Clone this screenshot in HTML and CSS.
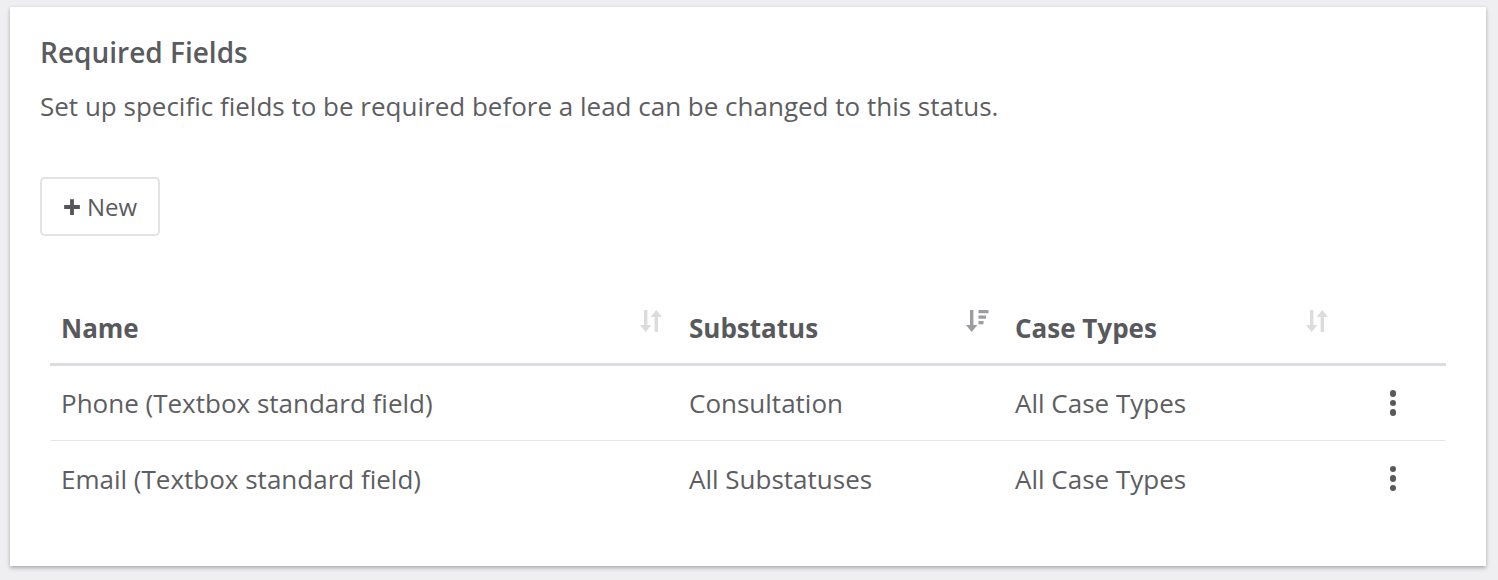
FILE: index.html
```html
<!DOCTYPE html>
<html>
<head>
<meta charset="utf-8">
<link rel="stylesheet" href="styles.css">
</head>
<body>
<div class="page">
  <section class="card">
    <h2 class="title">Required Fields</h2>
    <p class="desc">Set up specific fields to be required before a lead can be changed to this status.</p>
    <button class="btn-new" type="button">
      <svg class="plus" viewBox="0 0 16 16" width="18" height="18"><path d="M6.3 1h3.4v5.3H15v3.4H9.7V15H6.3V9.7H1V6.3h5.3z" fill="#555659"/></svg>
      <span>New</span>
    </button>
    <div class="table">
      <div class="row head">
        <div class="cell"><span>Name</span>
          <svg class="sort" viewBox="0 0 26 26" width="26" height="26"><path d="M6 2h3.4v15h4L7.7 24 2 17h4z M16.6 9h-4L18.3 2 24 9h-4v15h-3.4z" fill="#dcdcde"/></svg>
        </div>
        <div class="cell"><span>Substatus</span>
          <svg class="sort" viewBox="0 0 26 26" width="26" height="26"><path d="M6 2h3.4v15h4L7.7 24 2 17h4z" fill="#9c9da0"/><path d="M14.5 2h10v3.2h-10z M14.5 7.5h7.5v3.2h-7.5z M14.5 13h5v3.2h-5z" fill="#9c9da0"/></svg>
        </div>
        <div class="cell"><span>Case Types</span>
          <svg class="sort" viewBox="0 0 26 26" width="26" height="26"><path d="M6 2h3.4v15h4L7.7 24 2 17h4z M16.6 9h-4L18.3 2 24 9h-4v15h-3.4z" fill="#dcdcde"/></svg>
        </div>
        <div class="cell"></div>
      </div>
      <div class="row">
        <div class="cell">Phone (Textbox standard field)</div>
        <div class="cell">Consultation</div>
        <div class="cell">All Case Types</div>
        <div class="cell act"><span class="kebab"><i></i><i></i><i></i></span></div>
      </div>
      <div class="row last">
        <div class="cell">Email (Textbox standard field)</div>
        <div class="cell">All Substatuses</div>
        <div class="cell">All Case Types</div>
        <div class="cell act"><span class="kebab"><i></i><i></i><i></i></span></div>
      </div>
    </div>
  </section>
</div>
</body>
</html>
```

FILE: styles.css
```css
* { box-sizing: border-box; }
html, body { margin: 0; padding: 0; }
body {
  background: #efeff1;
  font-family: "Open Sans", "Noto Sans", sans-serif;
  color: #5d5e61;
  width: 1498px;
  height: 580px;
  overflow: hidden;
}
.page {
  padding: 7px 12px 0 10px;
}
.card {
  background: #fff;
  width: 1476px;
  height: 559px;
  padding: 27px 30px 0 30px;
  box-shadow: 0 2px 4px rgba(0,0,0,0.28), 0 0 2px rgba(0,0,0,0.06);
}
.title {
  margin: 0;
  font-size: 28px;
  line-height: 36px;
  font-weight: 600;
  color: #5a5b5e;
}
.desc {
  margin: 18px 0 0 0;
  font-size: 26px;
  line-height: 36px;
  color: #5d5e61;
}
.btn-new {
  margin-top: 53px;
  display: flex;
  align-items: center;
  gap: 6px;
  width: 120px;
  height: 59px;
  padding: 0 0 0 21px;
  background: #fff;
  border: 2px solid #e2e3e5;
  border-radius: 5px;
  font-family: inherit;
  font-size: 24px;
  color: #5a5b5e;
}
.plus { display: block; }
.table {
  margin: 57px 10px 0 10px;
}
.row {
  display: grid;
  grid-template-columns: 628px 326px 340px 1fr;
  height: 75px;
  border-bottom: 1px solid #e6e7e8;
  font-size: 26px;
  color: #5d5e61;
}
.row.head {
  height: 73px;
  border-bottom: 3px solid #dcdde0;
  font-weight: 700;
  color: #58595c;
}
.row.last { border-bottom: none; }
.cell {
  display: flex;
  align-items: center;
  padding: 0 14px 0 11px;
  white-space: nowrap;
}
.head .cell {
  justify-content: space-between;
}
.head .cell .sort { margin-top: -14px; }
.act { justify-content: center; padding: 0 4px 0 0; }
.kebab {
  display: flex;
  flex-direction: column;
  gap: 3px;
}
.kebab i {
  display: block;
  width: 6.5px;
  height: 6.5px;
  border-radius: 50%;
  background: #58595c;
}
```
